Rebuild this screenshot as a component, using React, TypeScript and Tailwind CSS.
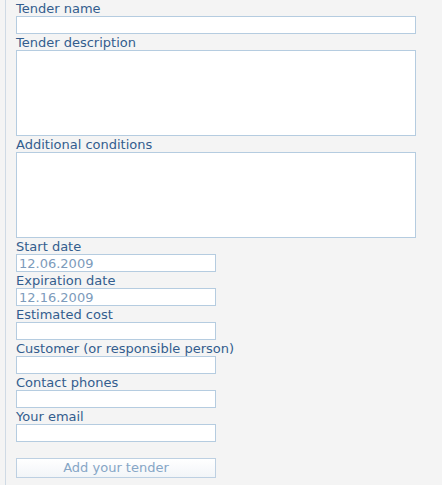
import React from 'react';

const label = 'block h-4 text-[13px] leading-[17px] text-[#335d8e]';
const input = 'block h-[18px] border border-[#b5cce0] bg-white px-0.5 text-[13px] leading-4 text-[#7d9bbb] outline-none';

function Field({ title, value, wide }: { title: string; value?: string; wide?: boolean }) {
  return (
    <div>
      <label className={label}>{title}</label>
      <input className={`${input} ${wide ? 'w-[400px]' : 'w-[200px]'}`} defaultValue={value} />
    </div>
  );
}

function Area({ title }: { title: string }) {
  return (
    <div>
      <label className={label}>{title}</label>
      <textarea className="block h-[86px] w-[400px] resize-none border border-[#b5cce0] bg-white outline-none" />
    </div>
  );
}

export default function App() {
  return (
    <div className="h-[485px] w-[442px] bg-[#f4f4f4] pl-[5px] font-['DejaVu_Sans',Verdana,sans-serif]">
      <div className="h-full border-l border-[#cfdae5] pl-[10px]">
        <Field title="Tender name" wide />
        <Area title="Tender description" />
        <Area title="Additional conditions" />
        <Field title="Start date" value="12.06.2009" />
        <Field title="Expiration date" value="12.16.2009" />
        <Field title="Estimated cost" />
        <Field title="Customer (or responsible person)" />
        <Field title="Contact phones" />
        <Field title="Your email" />
        <button className="mt-4 block h-5 w-[200px] border border-[#bdd0e2] bg-gradient-to-b from-white to-[#f2f5f8] text-[13px] leading-4 text-[#86a6c6]">
          Add your tender
        </button>
      </div>
    </div>
  );
}
